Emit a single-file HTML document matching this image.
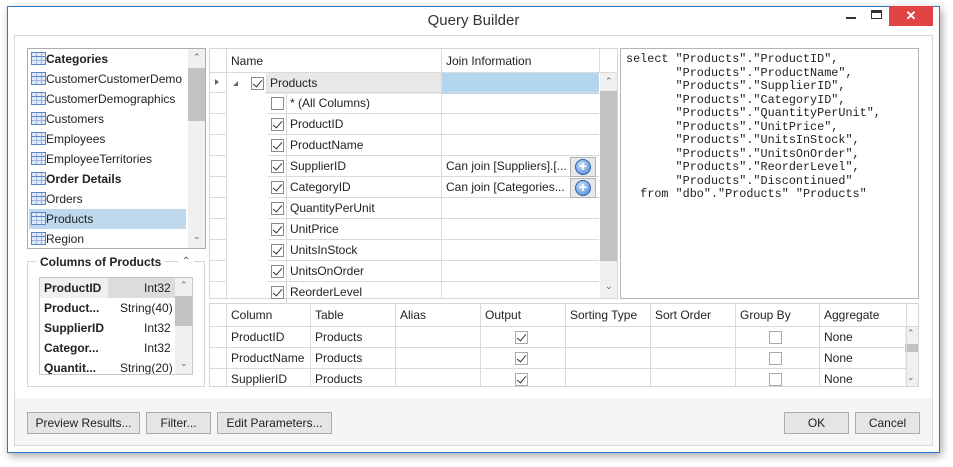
<!DOCTYPE html>
<html><head><style>
*{box-sizing:border-box;margin:0;padding:0}
body{width:953px;height:467px;background:#fff;font-family:"Liberation Sans",sans-serif;font-size:12px;color:#222;position:relative;overflow:hidden}
.a{position:absolute}
.win{left:7px;top:6px;width:933px;height:447px;border:1px solid #2b7ad0;background:#fff;box-shadow:2px 3px 8px rgba(0,0,0,.35)}
.panel{left:14px;top:35px;width:919px;height:411px;border:1px solid #d9d9d9;background:#fff}
.btnarea{left:15px;top:398px;width:917px;height:47px;background:#f5f5f5}
.box{border:1px solid #adadad;background:#fff}
.row{position:absolute;left:0;height:20px;line-height:20px;white-space:nowrap}
.ti{display:inline-block;width:15px;height:13px;vertical-align:-2px;border:1px solid #5a86c8;background:
linear-gradient(#5a86c8,#5a86c8) 0 3px/100% 1px no-repeat,linear-gradient(#9bb6e0,#9bb6e0) 0 7px/100% 1px no-repeat,
linear-gradient(90deg,transparent 4px,#9bb6e0 4px,#9bb6e0 5px,transparent 5px,transparent 9px,#9bb6e0 9px,#9bb6e0 10px,transparent 10px) ,#dfe9f7}
.cb{position:absolute;width:13px;height:13px;border:1px solid #8a8a8a;background:#fff}
.cb.c::after{content:"";position:absolute;left:3px;top:0px;width:4px;height:8px;border:solid #333;border-width:0 1.5px 1.5px 0;transform:rotate(40deg)}
.hl{position:absolute;background:#dadada}
.vl{position:absolute;background:#dadada;width:1px}
.btn{position:absolute;top:412px;height:22px;border:1px solid #acacac;background:#e5e5e5;text-align:center;line-height:20px;font-size:12px}
.sql{font-family:"Liberation Mono",monospace;font-size:11.8px;line-height:13.5px;white-space:pre;color:#222}
.sb{position:absolute;background:#f0f0f0}
.arr{position:absolute;font-size:9px;color:#666}
</style></head><body>
<div class="a win"></div>
<div class="a" style="left:8px;top:7px;width:931px;height:28px;text-align:center;line-height:28px;font-size:15px;color:#333">Query Builder</div>
<div class="a" style="left:846px;top:17px;width:10px;height:2px;background:#333"></div>
<div class="a" style="left:871px;top:10px;width:11px;height:9px;border:1px solid #333;border-top-width:3px"></div>
<div class="a" style="left:889px;top:6px;width:44px;height:20px;background:#e04343;color:#fff;text-align:center;line-height:20px;font-size:13px;font-weight:bold">✕</div>
<div class="a panel"></div>
<div class="a btnarea"></div>

<div class="a box" style="left:27px;top:48px;width:179px;height:201px;overflow:hidden">
 <div class="sb" style="left:160px;top:0;width:18px;height:199px"></div>
 <div class="a" style="left:160px;top:19px;width:18px;height:53px;background:#c2c2c2"></div>
 <div class="arr" style="left:165px;top:3px">&#8963;</div>
 <div class="arr" style="left:165px;top:182px">&#8964;</div>
 <div class="a" style="left:1px;top:160px;width:157px;height:20px;background:#bfd9ec"></div>
 <div class="row" style="top:0;left:3px"><span class="ti"></span><b>Categories</b></div>
 <div class="row" style="top:20px;left:3px"><span class="ti"></span>CustomerCustomerDemo</div>
 <div class="row" style="top:40px;left:3px"><span class="ti"></span>CustomerDemographics</div>
 <div class="row" style="top:60px;left:3px"><span class="ti"></span>Customers</div>
 <div class="row" style="top:80px;left:3px"><span class="ti"></span>Employees</div>
 <div class="row" style="top:100px;left:3px"><span class="ti"></span>EmployeeTerritories</div>
 <div class="row" style="top:120px;left:3px"><span class="ti"></span><b>Order Details</b></div>
 <div class="row" style="top:140px;left:3px"><span class="ti"></span>Orders</div>
 <div class="row" style="top:160px;left:3px"><span class="ti"></span>Products</div>
 <div class="row" style="top:180px;left:3px"><span class="ti"></span>Region</div>
</div>

<div class="a" style="left:27px;top:261px;width:178px;height:126px;border:1px solid #d5d5d5"></div>
<div class="a" style="left:36px;top:254px;padding:0 4px;background:#fff;font-weight:bold;line-height:16px">Columns of Products</div>
<div class="a" style="left:178px;top:254px;padding:0 4px;background:#fff;font-size:10px;color:#555;line-height:16px">&#8963;</div>
<div class="a box" style="left:39px;top:277px;width:154px;height:98px;overflow:hidden;border-color:#c8c8c8">
 <div class="sb" style="left:135px;top:0;width:17px;height:96px"></div>
 <div class="a" style="left:135px;top:18px;width:17px;height:30px;background:#c2c2c2"></div>
 <div class="arr" style="left:140px;top:2px">&#8963;</div>
 <div class="arr" style="left:140px;top:80px">&#8964;</div>
 <div class="a" style="left:0;top:0;width:68px;height:20px;background:#f0f0f0"></div>
 <div class="a" style="left:68px;top:0;width:67px;height:20px;background:#dcdcdc"></div>
 <div class="row" style="top:0;left:4px;font-weight:bold">ProductID</div><div class="row" style="top:0;left:104px">Int32</div>
 <div class="row" style="top:20px;left:4px;font-weight:bold">Product...</div><div class="row" style="top:20px;left:80px">String(40)</div>
 <div class="row" style="top:40px;left:4px;font-weight:bold">SupplierID</div><div class="row" style="top:40px;left:104px">Int32</div>
 <div class="row" style="top:60px;left:4px;font-weight:bold">Categor...</div><div class="row" style="top:60px;left:104px">Int32</div>
 <div class="row" style="top:80px;left:4px;font-weight:bold">Quantit...</div><div class="row" style="top:80px;left:80px">String(20)</div>
</div>

<div class="a" style="left:209px;top:48px;width:409px;height:251px;border:1px solid #d5d5d5;overflow:hidden">
 <div class="hl" style="left:0;top:23px;width:407px;height:1px"></div>
 <div class="vl" style="left:16px;top:0;height:251px"></div>
 <div class="vl" style="left:231px;top:0;height:251px"></div>
 <div class="vl" style="left:389px;top:0;height:23px"></div>
 <div class="row" style="left:21px;top:2px">Name</div>
 <div class="row" style="left:236px;top:2px">Join Information</div>
 <div class="a" style="left:232px;top:24px;width:157px;height:21px;background:#b3d5ee"></div>
 <div class="a" style="left:56px;top:24px;width:175px;height:21px;background:#e8e8e8"></div>
 <div class="sb" style="left:390px;top:24px;width:17px;height:225px"></div>
 <div class="a" style="left:390px;top:42px;width:17px;height:170px;background:#c2c2c2"></div>
 <div class="arr" style="left:395px;top:27px">&#8963;</div>
 <div class="arr" style="left:395px;top:232px">&#8964;</div>
 <div class="a" style="left:5px;top:30px;width:0;height:0;border:3.5px solid transparent;border-left:4px solid #666"></div>
 <div class="a" style="left:23px;top:32px;width:0;height:0;border-left:5px solid transparent;border-bottom:5px solid #666"></div>
 <div class="cb c" style="left:41px;top:28px"></div>
 <div class="row" style="left:60px;top:24px;line-height:21px;height:21px">Products</div>
</div>
<div id="mrows"></div>

<div class="a box sql" style="left:620px;top:48px;width:299px;height:251px;padding:4px 0 0 5px;border-color:#b5b5b5">select "Products"."ProductID",
       "Products"."ProductName",
       "Products"."SupplierID",
       "Products"."CategoryID",
       "Products"."QuantityPerUnit",
       "Products"."UnitPrice",
       "Products"."UnitsInStock",
       "Products"."UnitsOnOrder",
       "Products"."ReorderLevel",
       "Products"."Discontinued"
  from "dbo"."Products" "Products"</div>

<div class="a" style="left:209px;top:303px;width:710px;height:84px;border:1px solid #d5d5d5;overflow:hidden" id="bg">
 <div class="sb" style="left:695px;top:22px;width:13px;height:60px"></div>
 <div class="a" style="left:695px;top:40px;width:13px;height:8px;background:#c2c2c2"></div>
 <div class="arr" style="left:697px;top:24px">&#8963;</div>
 <div class="arr" style="left:697px;top:68px">&#8964;</div>
</div>

<div class="btn" style="left:27px;width:113px">Preview Results...</div>
<div class="btn" style="left:146px;width:65px">Filter...</div>
<div class="btn" style="left:217px;width:115px">Edit Parameters...</div>
<div class="btn" style="left:784px;width:65px">OK</div>
<div class="btn" style="left:855px;width:65px">Cancel</div>

<script>
var names=["* (All Columns)","ProductID","ProductName","SupplierID","CategoryID","QuantityPerUnit","UnitPrice","UnitsInStock","UnitsOnOrder","ReorderLevel"];
var h="";
for(var i=0;i<names.length;i++){
 var y=72+21*(i+1);
 h+='<div class="hl" style="left:210px;top:'+(y-1)+'px;width:16px;height:1px"></div>';
 h+='<div class="hl" style="left:'+(i==0?265:268)+'px;top:'+(y-1)+'px;width:'+(i==0?334:331)+'px;height:1px"></div>';
 h+='<div class="vl" style="left:286px;top:'+y+'px;height:21px"></div>';
 h+='<div class="cb'+(i>0?' c':'')+'" style="left:271px;top:'+(y+4)+'px"></div>';
 if(y+20<298) h+='<div class="row" style="left:290px;top:'+y+'px;height:21px;line-height:21px">'+names[i]+'</div>';
 else h+='<div class="row" style="left:290px;top:'+y+'px;height:16px;line-height:21px;overflow:hidden">'+names[i]+'</div>';
}
h+='<div class="row" style="left:446px;top:156px;line-height:21px">Can join [Suppliers].[...</div>';
h+='<div class="row" style="left:446px;top:177px;line-height:21px">Can join [Categories...</div>';
[156,177].forEach(function(y){h+='<div class="a" style="left:570px;top:'+(y+1)+'px;width:26px;height:20px;border:1px solid #b5b5b5;background:#e8e8e8"></div><div class="a" style="left:575px;top:'+(y+3)+'px;width:16px;height:16px;border-radius:50%;background:radial-gradient(circle at 40% 35%,#cfe4fa,#3b7fd0);border:1px solid #2d65b0;color:#fff;font-weight:bold;text-align:center;line-height:13px;font-size:14px">+</div>';});
document.getElementById('mrows').outerHTML=h;
var bg=document.getElementById('bg'),b="";
var xs=[0,16,100,185,270,355,440,525,609,696];
var hd=["","Column","Table","Alias","Output","Sorting Type","Sort Order","Group By","Aggregate"];
for(var k=1;k<xs.length;k++)b+='<div class="vl" style="left:'+xs[k]+'px;top:0;height:84px"></div>';
b+='<div class="hl" style="left:0;top:22px;width:708px;height:1px"></div>';
for(k=1;k<hd.length;k++)b+='<div class="row" style="left:'+(xs[k]+5)+'px;top:1px">'+hd[k]+'</div>';
var rows=["ProductID","ProductName","SupplierID"];
for(var r=0;r<3;r++){var y=23+21*r;
 b+='<div class="hl" style="left:0;top:'+(y+20)+'px;width:696px;height:1px"></div>';
 b+='<div class="row" style="left:21px;top:'+y+'px;line-height:21px">'+rows[r]+'</div>';
 b+='<div class="row" style="left:105px;top:'+y+'px;line-height:21px">Products</div>';
 b+='<div class="row" style="left:614px;top:'+y+'px;line-height:21px">None</div>';
 b+='<div class="cb c" style="left:305px;top:'+(y+4)+'px;border-color:#aaa"></div>';
 b+='<div class="cb" style="left:559px;top:'+(y+4)+'px;border-color:#aaa"></div>';
}
bg.insertAdjacentHTML('beforeend',b);
</script>
</body></html>
